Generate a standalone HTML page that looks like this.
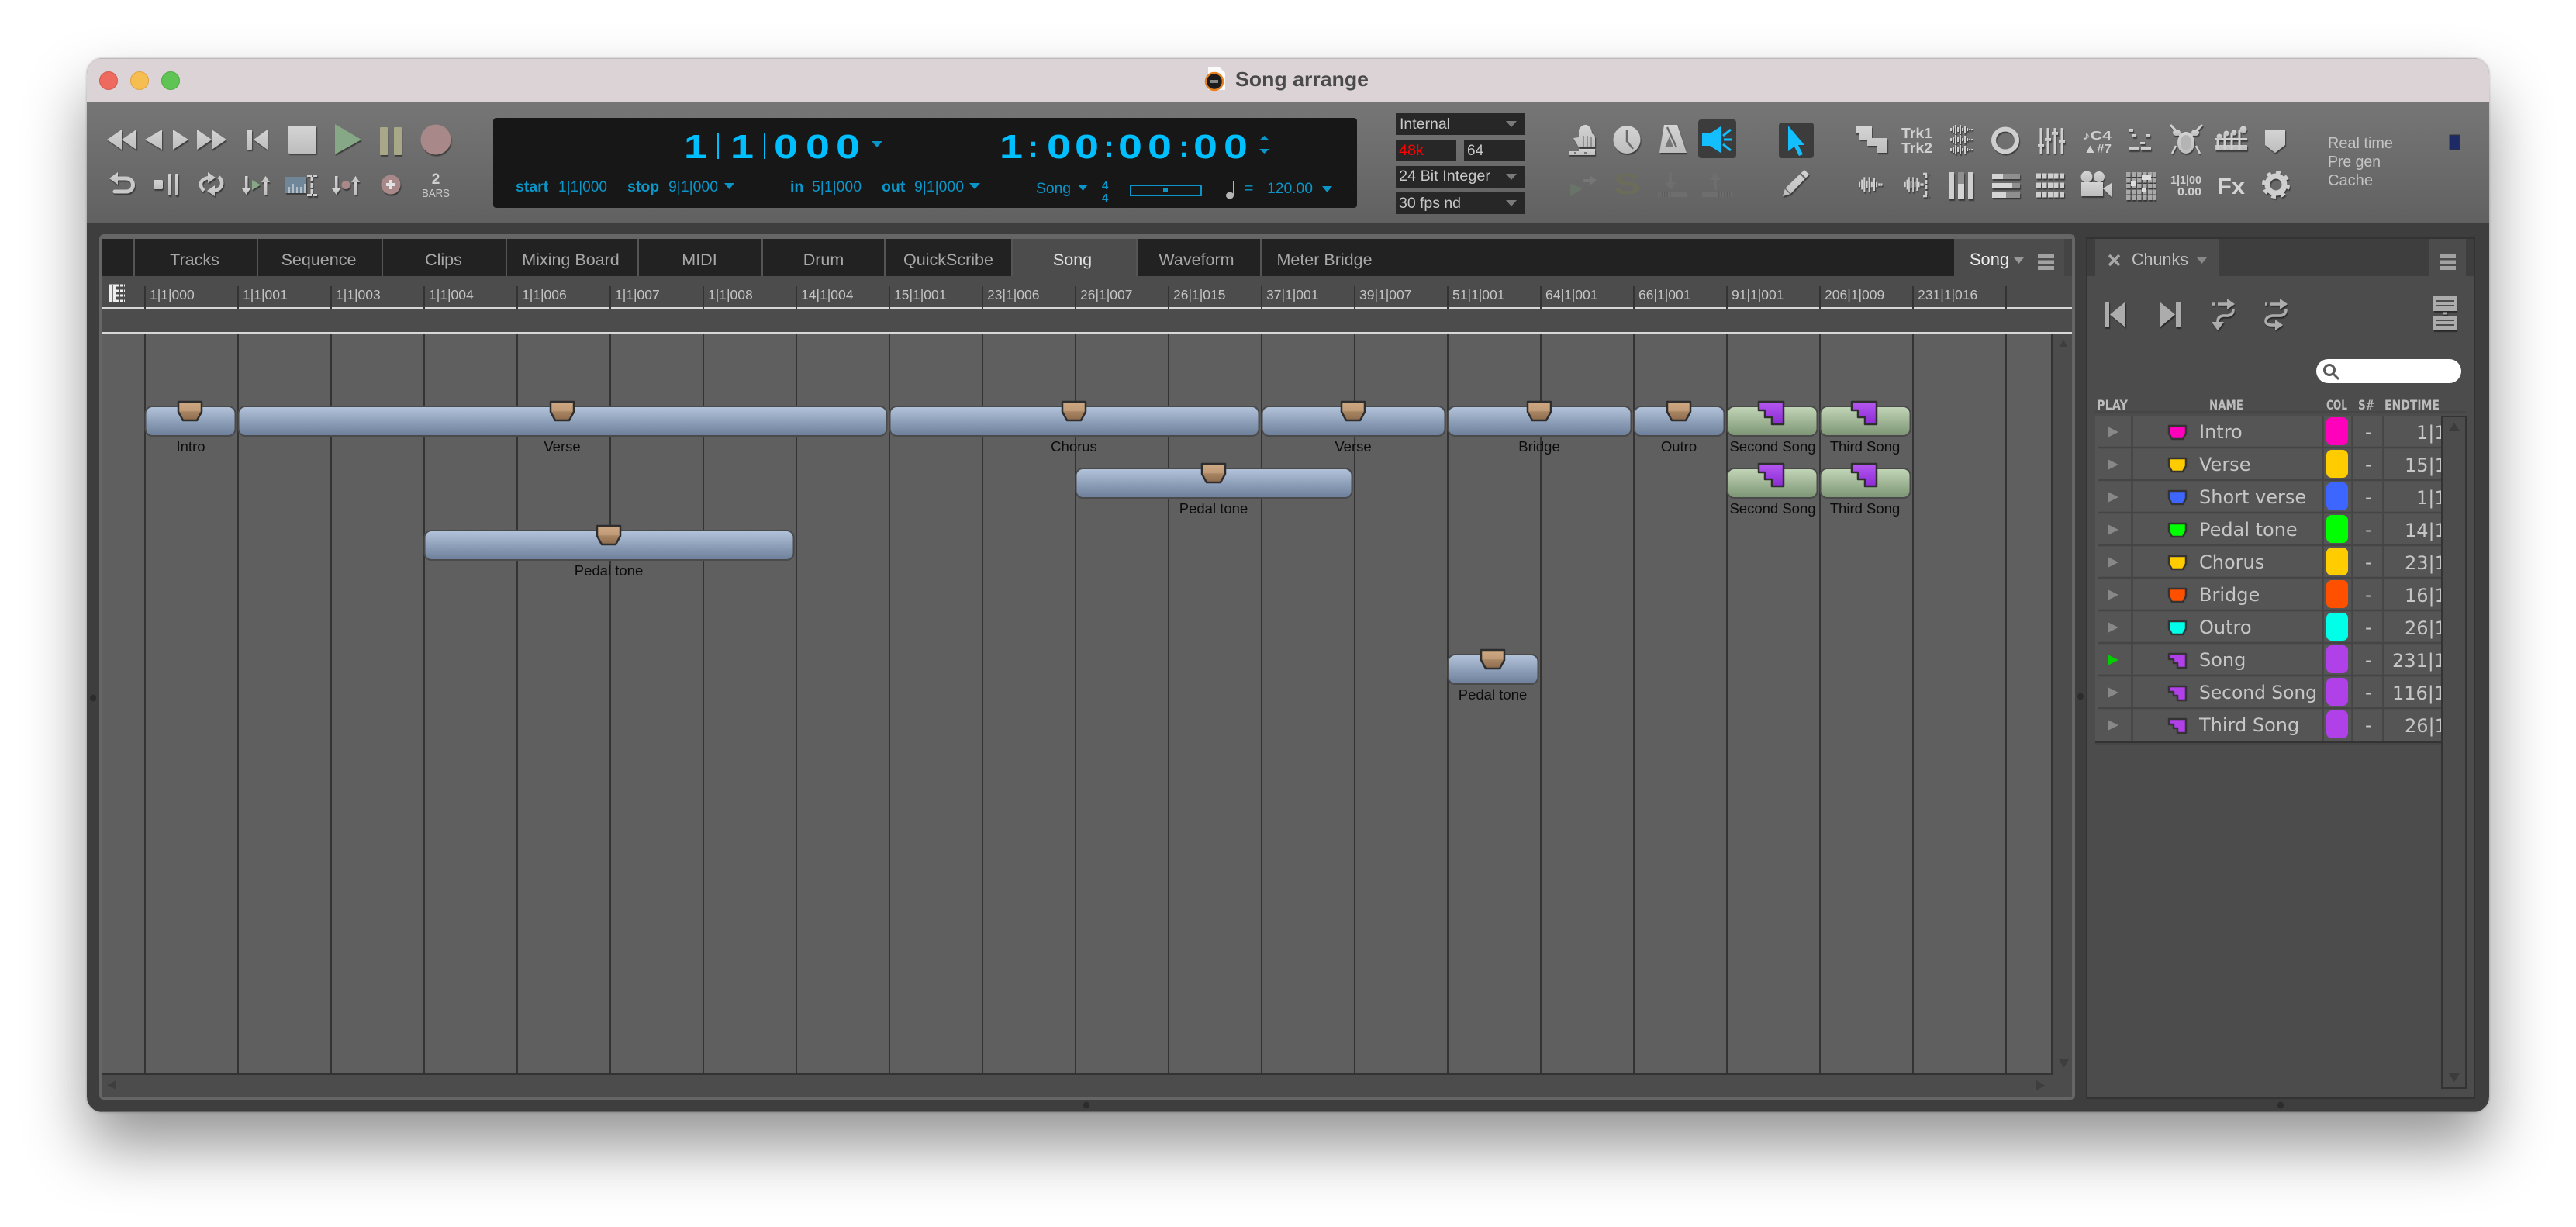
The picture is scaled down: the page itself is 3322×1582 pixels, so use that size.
<!DOCTYPE html>
<html lang="en"><head><meta charset="utf-8"><title>Song arrange</title>
<style>
html,body{margin:0;padding:0;background:#fff;width:3322px;height:1582px;overflow:hidden}
#sh{position:absolute;left:112px;top:75px;width:3098px;height:1359px;border-radius:20px;box-shadow:0 44px 80px rgba(0,0,0,.42),0 0 3px rgba(0,0,0,.25)}
svg{position:absolute;left:0;top:0}
text{font-family:"Liberation Sans",sans-serif}
.dj{font-family:"DejaVu Sans",sans-serif}
.rul{font-size:17.5px;fill:#c4c4c4}
.tab{font-size:21.5px;fill:#a8a8a8;text-anchor:middle}
.lb{font-size:18.5px;fill:#0c0c0c;text-anchor:middle}
.bl{font-size:19.5px;fill:#0a96c8}
.blb{font-size:19.5px;fill:#0a96c8;font-weight:bold}
.big{font-size:44px;font-weight:bold;fill:#00bfff}
.dd{font-size:19px;fill:#c8c8c8}
.nm{font-size:24px;fill:#c6c6c6}
.et{font-size:24px;fill:#c6c6c6}
.hd{font-size:17px;font-weight:bold;fill:#bcbcbc}
</style></head><body>
<div id="sh"></div>
<svg width="3322" height="1582" viewBox="0 0 3322 1582" xmlns="http://www.w3.org/2000/svg">
<defs>
<linearGradient id="tb" x1="0" y1="0" x2="0" y2="1"><stop offset="0" stop-color="#767676"/><stop offset="1" stop-color="#616161"/></linearGradient>
<linearGradient id="ic" x1="0" y1="0" x2="0" y2="1"><stop offset="0" stop-color="#d4d4d4"/><stop offset="1" stop-color="#bdbdbd"/></linearGradient>
<linearGradient id="blu" x1="0" y1="0" x2="0" y2="1"><stop offset="0" stop-color="#b3c4db"/><stop offset="1" stop-color="#6c7e99"/></linearGradient>
<linearGradient id="grn" x1="0" y1="0" x2="0" y2="1"><stop offset="0" stop-color="#c3d7b8"/><stop offset="1" stop-color="#7c9474"/></linearGradient>
<linearGradient id="br" x1="0" y1="0" x2="0" y2="1"><stop offset="0" stop-color="#d0aa84"/><stop offset=".5" stop-color="#bf9a76"/><stop offset=".52" stop-color="#a98764"/><stop offset="1" stop-color="#8c6a4c"/></linearGradient>
<linearGradient id="pur" x1="0" y1="0" x2="0" y2="1"><stop offset="0" stop-color="#b658f2"/><stop offset="1" stop-color="#8a2cd2"/></linearGradient>
<filter id="ds" x="-5%" y="-20%" width="110%" height="140%"><feDropShadow dx="1" dy="2" stdDeviation=".6" flood-color="#000" flood-opacity=".45"/></filter>
<pattern id="ln" width="36" height="40" patternUnits="userSpaceOnUse"><rect x="35" width="1" height="40" fill="#000" opacity=".025"/></pattern>
<clipPath id="win"><rect x="112" y="75" width="3098" height="1359" rx="20"/></clipPath>
<path id="mk" d="M-15 0H15V13L9 24H-9L-15 13Z" fill="url(#br)" stroke="#2e2e2e" stroke-width="2.5" stroke-linejoin="round"/>
<path id="pk" d="M-16 0H16V29H1V20H-8V11H-16Z" fill="url(#pur)" stroke="#2e2e2e" stroke-width="2.5" stroke-linejoin="round"/>
<path id="rk" d="M2797 549H2819V559L2815 566H2801L2797 559Z" stroke="#333" stroke-width="2.5" stroke-linejoin="round"/>
<path id="rs" d="M2797 549H2819V567H2808V561H2803V556H2797Z" stroke="#333" stroke-width="2.5" stroke-linejoin="round"/>
<polygon id="pt" points="2718,550 2732,557 2718,564"/>
<path id="wv" d="M1 -2V2M4 -4V4M7 -6V6M10 -3V3M13 -6V6M16 -2V2M19 -5V5M22 -2V2M25 -1V1M28 -1V1" fill="none" stroke="#cfcfcf" stroke-width="2"/>
</defs>

<g clip-path="url(#win)">
<rect x="112" y="75" width="3098" height="1359" fill="#3e3e3e"/>
<rect x="112" y="75" width="3098" height="57" fill="#dcd3d7"/>
<rect x="112" y="75" width="3098" height="1" fill="#bdb8ba"/>
<rect x="112" y="132" width="3098" height="156" fill="url(#tb)"/>
<rect x="112" y="1432" width="3098" height="2" fill="#6a6a6a"/>
</g>

<!-- title bar -->
<circle cx="140" cy="104" r="11.5" fill="#ee6a5f" stroke="#d4574d"/>
<circle cx="180" cy="104" r="11.5" fill="#f6be50" stroke="#dea23c"/>
<circle cx="220" cy="104" r="11.5" fill="#5fc454" stroke="#4eab44"/>
<path d="M1558 87H1573L1580 94V116H1558Z" fill="#fbfbfb"/>
<circle cx="1566" cy="105" r="11" fill="#1c1c1c" stroke="#e8801e" stroke-width="2.5"/>
<rect x="1561" y="103" width="10" height="4" fill="#888"/>
<text x="1593" y="111" font-size="26" font-weight="bold" fill="#4a4a4a" textLength="172" lengthAdjust="spacingAndGlyphs">Song arrange</text>

<!-- transport -->
<g filter="url(#ds)" fill="url(#ic)" stroke-linejoin="round">
<polygon points="138,180 157,167 157,193"/><polygon points="157,180 176,167 176,193"/>
<polygon points="187,180 209,167 209,193"/>
<polygon points="223,167 243,180 223,193"/>
<polygon points="254,167 273,180 254,193"/><polygon points="273,167 292,180 273,193"/>
<rect x="318" y="167" width="7" height="26" rx="1"/><polygon points="345,167 327,180 345,193"/>
<rect x="372" y="162" width="36" height="36" rx="1.5"/>
<polygon points="432,160 466,180 432,199" fill="#86a886"/>
<rect x="490" y="164" width="10" height="36" rx="1" fill="#a8a888"/><rect x="508" y="164" width="10" height="36" rx="1" fill="#a8a888"/>
<circle cx="562" cy="180" r="19.5" fill="#a88888"/>
<path d="M150 230H163A8.5 8.5 0 0 1 163 247H148" fill="none" stroke="#c8c8c8" stroke-width="5" stroke-linecap="round"/>
<polygon points="141,230 152,222 152,238"/>
<rect x="198" y="232" width="12" height="12" rx="2"/><rect x="217" y="224" width="3.5" height="28" rx="1"/><rect x="226" y="224" width="4" height="28" rx="1"/>
<path d="M263 246Q258 241 259 236Q261 230 270 229M282 228Q287 233 286 238Q284 245 275 246" fill="none" stroke="#c8c8c8" stroke-width="4.500"/>
<polygon points="268,222 278,229 268,236"/><polygon points="277,239 267,246 277,253"/>
<rect x="316" y="227" width="3.5" height="18"/><polygon points="312,243 323,243 317.5,251"/>
<polygon points="325,232 336,238.500 325,245" fill="#86a886"/>
<rect x="341" y="233" width="3.500" height="18"/><polygon points="337,235 348,235 342.500,227"/>
<path d="M368 228H395V249H368Z" fill="#6f8799"/>
<path d="M373 249V241M378 249V237M383 249V241M388 249V241M393 249V237" stroke="#c8d0d6" stroke-width="1.5"/>
<path d="M402 228V250M396 226.500H409M396 251.500H409" stroke="#cfcfcf" stroke-width="3" fill="none" stroke-dasharray="6 2"/>
<rect x="432" y="227" width="3.500" height="18"/><polygon points="428,243 439,243 433.500,251"/>
<circle cx="446" cy="238.500" r="5.500" fill="#a88888"/>
<rect x="457" y="233" width="3.500" height="18"/><polygon points="453,235 464,235 458.500,227"/>
<circle cx="504" cy="238" r="12.500" fill="#a88888"/>
<path d="M504 232V244M498 238H510" stroke="#e2e2e2" stroke-width="4"/>
</g>
<text x="562" y="237" font-size="19" font-weight="bold" fill="#d0d0d0" text-anchor="middle">2</text>
<text x="544" y="254" font-size="15" fill="#c8c8c8" textLength="36" lengthAdjust="spacingAndGlyphs">BARS</text>

<!-- counter display -->
<rect x="636" y="152" width="1114" height="116" rx="4" fill="#171717"/>
<g class="big">
<text class="big" x="882" y="204" textLength="30" lengthAdjust="spacingAndGlyphs">1</text>
<rect x="925" y="171" width="2" height="34" fill="#00bfff"/>
<text class="big" x="942" y="204" textLength="30" lengthAdjust="spacingAndGlyphs">1</text>
<rect x="985" y="171" width="2" height="34" fill="#00bfff"/>
<text class="big" x="998" y="204" textLength="31" lengthAdjust="spacingAndGlyphs">0</text>
<text class="big" x="1039" y="204" textLength="31" lengthAdjust="spacingAndGlyphs">0</text>
<text class="big" x="1078" y="204" textLength="31" lengthAdjust="spacingAndGlyphs">0</text>
<text class="big" x="1289" y="204" textLength="30" lengthAdjust="spacingAndGlyphs">1</text>
<text class="big" x="1325" y="202" style="font-size:38px" textLength="14" lengthAdjust="spacingAndGlyphs">:</text>
<text class="big" x="1350" y="204" textLength="31" lengthAdjust="spacingAndGlyphs">0</text>
<text class="big" x="1386" y="204" textLength="31" lengthAdjust="spacingAndGlyphs">0</text>
<text class="big" x="1423" y="202" style="font-size:38px" textLength="14" lengthAdjust="spacingAndGlyphs">:</text>
<text class="big" x="1442" y="204" textLength="31" lengthAdjust="spacingAndGlyphs">0</text>
<text class="big" x="1480" y="204" textLength="31" lengthAdjust="spacingAndGlyphs">0</text>
<text class="big" x="1520" y="202" style="font-size:38px" textLength="14" lengthAdjust="spacingAndGlyphs">:</text>
<text class="big" x="1539" y="204" textLength="31" lengthAdjust="spacingAndGlyphs">0</text>
<text class="big" x="1578" y="204" textLength="31" lengthAdjust="spacingAndGlyphs">0</text>
</g>
<g fill="#0a96c8">
<polygon points="1124,182 1138,182 1131,190"/>
<polygon points="1624,181 1637,181 1630.500,175"/><polygon points="1624,192 1637,192 1630.500,198"/>
<polygon points="934,236 947,236 940.500,244"/>
<polygon points="1250,236 1264,236 1257,244"/>
<polygon points="1390,238 1403,238 1396.500,246"/>
<polygon points="1705,240 1718,240 1711.500,248"/>
</g>
<text class="blb" x="665" y="247">start</text>
<text class="bl" x="720" y="247" textLength="63" lengthAdjust="spacingAndGlyphs">1|1|000</text>
<text class="blb" x="809" y="247">stop</text>
<text class="bl" x="862" y="247" textLength="64" lengthAdjust="spacingAndGlyphs">9|1|000</text>
<text class="blb" x="1019" y="247">in</text>
<text class="bl" x="1047" y="247" textLength="64" lengthAdjust="spacingAndGlyphs">5|1|000</text>
<text class="blb" x="1137" y="247">out</text>
<text class="bl" x="1179" y="247" textLength="64" lengthAdjust="spacingAndGlyphs">9|1|000</text>
<text class="bl" x="1336" y="249" textLength="45" lengthAdjust="spacingAndGlyphs">Song</text>
<text class="blb" x="1421" y="244" style="font-size:15px">4</text>
<text class="blb" x="1421" y="260" style="font-size:15px">4</text>
<rect x="1458" y="239" width="91" height="13" fill="none" stroke="#0a96c8" stroke-width="2"/>
<rect x="1500" y="242" width="6" height="6" fill="#0a96c8"/>
<ellipse cx="1586" cy="252" rx="5" ry="4.500" fill="#b4b4b4"/><rect x="1590" y="234" width="1.500" height="18" fill="#b4b4b4"/>
<text class="bl" x="1605" y="249">=</text>
<text class="bl" x="1634" y="249" textLength="59" lengthAdjust="spacingAndGlyphs">120.00</text>

<!-- dropdowns -->
<g fill="#272727">
<rect x="1800" y="146" width="166" height="28"/><rect x="1800" y="180" width="78" height="28"/><rect x="1888" y="180" width="78" height="28"/><rect x="1800" y="214" width="166" height="28"/><rect x="1800" y="248" width="166" height="28"/>
</g>
<text class="dd" x="1805" y="166" textLength="65" lengthAdjust="spacingAndGlyphs">Internal</text>
<text class="dd" x="1804" y="200" style="fill:#ff0000" textLength="32" lengthAdjust="spacingAndGlyphs">48k</text>
<text class="dd" x="1892" y="200">64</text>
<text class="dd" x="1804" y="233" textLength="118" lengthAdjust="spacingAndGlyphs">24 Bit Integer</text>
<text class="dd" x="1804" y="268" textLength="80" lengthAdjust="spacingAndGlyphs">30 fps nd</text>
<g fill="#7a7a7a"><polygon points="1942,156 1956,156 1949,164"/><polygon points="1942,224 1956,224 1949,232"/><polygon points="1942,258 1956,258 1949,266"/></g>

<!-- right toolbar icons -->
<rect x="2190" y="154" width="49" height="50" rx="4" fill="#3c3c3c"/>
<rect x="2294" y="158" width="45" height="46" rx="4" fill="#3c3c3c"/>
<g fill="#14bfff" stroke="none">
<polygon points="2195,172 2205,172 2219,163 2219,197 2205,188 2195,188"/>
<path d="M2222 175L2232 167M2223 180H2234M2222 186L2232 194" stroke="#14bfff" stroke-width="3" fill="none"/>
<polygon points="2306,162 2327,187 2319,187 2325,199 2320,201 2314,189 2306,195"/>
</g>
<g filter="url(#ds)" fill="url(#ic)">
<path d="M2036 190L2029 178L2036 177V167Q2040 160 2046 161Q2052 163 2053 172L2057 176V190Z"/>
<path d="M2042 175V190M2047 175V190M2052 177V190" stroke="#777" stroke-width="1.300"/>
<path d="M2036 192H2057V200H2023V195H2036Z"/>
<path d="M2030 197H2033M2043 197H2046" stroke="#777" stroke-width="2"/>
<ellipse cx="2098" cy="180" rx="17.500" ry="18"/>
<path d="M2098 167V182L2106 192" fill="none" stroke="#6a6a6a" stroke-width="2.500"/>
<path d="M2146 161H2163L2175 197H2140Z"/>
<path d="M2150 164L2162 190" stroke="#6a6a6a" stroke-width="2.500"/><path d="M2153 176L2147 190H2158Z" fill="#777"/>
<polygon points="2393,163 2414,163 2414,178 2434,178 2434,197 2421,197 2421,188 2408,188 2408,180 2398,180 2398,172 2393,172"/>
<use href="#wv" x="2515" y="167"/><use href="#wv" x="2515" y="180"/><use href="#wv" x="2515" y="193"/>
<ellipse cx="2586" cy="181" rx="15" ry="14.500" fill="none" stroke="#cfcfcf" stroke-width="6"/>
<path d="M2632 165V198M2641 165V198M2650 165V198M2659 165V198" stroke="#cfcfcf" stroke-width="3"/>
<rect x="2628" y="186" width="8" height="4"/><rect x="2637" y="178" width="8" height="4"/><rect x="2646" y="170" width="8" height="4"/><rect x="2655" y="181" width="8" height="4"/>
<rect x="2745" y="166" width="6" height="4"/><rect x="2750" y="173" width="5" height="4"/><rect x="2767" y="173" width="6" height="4"/><rect x="2760" y="183" width="6" height="3"/><rect x="2745" y="190" width="14" height="4"/><rect x="2761" y="190" width="13" height="4"/>
<ellipse cx="2819" cy="184" rx="11" ry="14"/><ellipse cx="2819" cy="184" rx="7" ry="10" fill="#b4b4b4"/>
<path d="M2799 161L2812 175M2840 161L2826 175" stroke="#cfcfcf" stroke-width="3"/>
<ellipse cx="2807" cy="171" rx="5" ry="4"/><ellipse cx="2831" cy="171" rx="5" ry="4"/>
<path d="M2801 198L2806 188M2837 198L2832 188" stroke="#cfcfcf" stroke-width="2.500"/>
<path d="M2857 178H2898V181H2857ZM2857 187H2898V194H2857Z"/>
<path d="M2860 178V194M2869 173V194M2878 172V194M2888 167V194" stroke="#cfcfcf" stroke-width="3"/>
<circle cx="2862" cy="176" r="3.500"/><circle cx="2871" cy="172" r="3.500"/><circle cx="2881" cy="171" r="3.500"/><circle cx="2893" cy="167" r="4.500"/>
<polygon points="2921,167 2947,167 2947,187 2934,197 2921,187"/>
<path d="M2299 253L2302 243L2327 219L2333 225L2309 250Z"/>
<path d="M2322 224L2328 230" stroke="#666" stroke-width="2"/><path d="M2302 243L2309 250" stroke="#666" stroke-width="1.500"/>
<use href="#wv" transform="translate(2397,238) scale(1.05,1.6)"/>
<use href="#wv" transform="translate(2456,238) scale(.85,1.6)"/>
<path d="M2484 225V252M2480 224H2488M2480 253H2488" stroke="#cfcfcf" stroke-width="2.500" stroke-dasharray="5 2" fill="none"/>
<rect x="2513" y="222" width="7" height="35" fill="#cfcfcf"/><rect x="2525" y="222" width="8" height="35" fill="#8f8f8f"/><rect x="2525" y="237" width="8" height="20" fill="#d4d4d4"/><rect x="2538" y="222" width="7" height="35" fill="#cfcfcf"/>
<rect x="2569" y="224" width="36" height="7" fill="#8f8f8f"/><rect x="2569" y="224" width="14" height="7" fill="#d4d4d4"/>
<rect x="2569" y="236" width="36" height="7" fill="#8f8f8f"/><rect x="2569" y="236" width="26" height="7" fill="#d4d4d4"/>
<rect x="2569" y="248" width="36" height="7" fill="#8f8f8f"/><rect x="2569" y="248" width="18" height="7" fill="#d4d4d4"/>
<path d="M2626 227H2663M2626 239H2663M2626 251H2663" stroke="#cfcfcf" stroke-width="7" stroke-dasharray="6 1.500"/>
<circle cx="2691" cy="228" r="7.500"/><circle cx="2707" cy="228" r="7"/>
<rect x="2684" y="235" width="28" height="18"/><polygon points="2712,243 2723,236 2723,254"/>
<path d="M2742 225H2780M2742 232.500H2780M2742 240H2780M2742 247.500H2780M2742 255H2780" stroke="#a8a8a8" stroke-width="6" stroke-dasharray="5.500 1.500"/>
<path d="M2762 229H2774M2748 237H2755M2762 245H2768" stroke="#dedede" stroke-width="6"/>
<circle cx="2935" cy="238" r="11" fill="none" stroke="#cfcfcf" stroke-width="7"/>
<circle cx="2935" cy="238" r="15" fill="none" stroke="#cfcfcf" stroke-width="6" stroke-dasharray="5.500 6.280"/>
</g>
<g fill="#d0d0d0" font-weight="bold">
<text x="2452" y="178" font-size="18" font-weight="bold" fill="#d0d0d0" textLength="40" lengthAdjust="spacingAndGlyphs">Trk1</text>
<text x="2452" y="197" font-size="18" font-weight="bold" fill="#d0d0d0" textLength="40" lengthAdjust="spacingAndGlyphs">Trk2</text>
<text x="2685" y="180" font-size="16" font-weight="bold" fill="#d0d0d0" textLength="38" lengthAdjust="spacingAndGlyphs">♪C4</text>
<text x="2687" y="197" font-size="16" font-weight="bold" fill="#d0d0d0" textLength="36" lengthAdjust="spacingAndGlyphs">▲#7</text>
<text x="2799" y="237" font-size="15" font-weight="bold" fill="#d0d0d0" textLength="40" lengthAdjust="spacingAndGlyphs">1|1|00</text>
<text x="2808" y="252" font-size="15" font-weight="bold" fill="#d0d0d0" textLength="31" lengthAdjust="spacingAndGlyphs">0.00</text>
<text x="2859" y="250" font-size="29" font-weight="bold" fill="#d4d4d4" textLength="36" lengthAdjust="spacingAndGlyphs">Fx</text>
</g>
<!-- dimmed -->
<g fill="#6e6e6e">
<polygon points="2025,237 2041,243 2025,253" fill="#697469"/>
<path d="M2042 231H2050V226L2059 232L2050 239V235H2042Z" fill="#767676"/>
<rect x="2152" y="222" width="4" height="15"/><polygon points="2147,235 2161,235 2154,245"/>
<path d="M2138 248H2175V254H2138Z" fill="#6e6e6e"/>
<path d="M2139 251H2156" stroke="#5e5e5e" stroke-width="6" stroke-dasharray="1.500 2"/>
<polygon points="2205,232 2219,232 2212,222"/><rect x="2210" y="230" width="4" height="15"/>
<path d="M2195 248H2233V254H2195Z" fill="#6e6e6e"/>
<path d="M2216 251H2233" stroke="#5e5e5e" stroke-width="6" stroke-dasharray="1.500 2"/>
</g>
<text x="2081" y="250" font-size="38" font-weight="bold" fill="#6c6c5a" textLength="35" lengthAdjust="spacingAndGlyphs">S</text>

<text x="3002" y="191" font-size="20" fill="#c4c4c4" textLength="84" lengthAdjust="spacingAndGlyphs">Real time</text>
<text x="3002" y="215" font-size="20" fill="#c4c4c4" textLength="68" lengthAdjust="spacingAndGlyphs">Pre gen</text>
<text x="3002" y="239" font-size="20" fill="#c4c4c4" textLength="58" lengthAdjust="spacingAndGlyphs">Cache</text>
<rect x="3159" y="174" width="13" height="19" fill="#1e2a66" stroke="#333" stroke-width="1"/>

<!-- main panel -->
<rect x="128" y="302" width="2548" height="1116" rx="6" fill="#666"/>
<rect x="132" y="308" width="2540" height="1106" fill="#4c4c4c"/>
<rect x="132" y="308" width="2388" height="48" fill="#222"/>
<rect x="2662" y="308" width="10" height="48" fill="#444"/>
<rect x="1306" y="308" width="160" height="48" fill="#4c4c4c"/>
<path d="M173 308V356M332 308V356M493 308V356M653 308V356M823 308V356M983 308V356M1141 308V356M1305 308V356M1466 308V356M1626 308V356" stroke="#555" stroke-width="2"/>
<text class="tab" x="251" y="342">Tracks</text>
<text class="tab" x="411" y="342">Sequence</text>
<text class="tab" x="572" y="342">Clips</text>
<text class="tab" x="736" y="342">Mixing Board</text>
<text class="tab" x="902" y="342">MIDI</text>
<text class="tab" x="1062" y="342">Drum</text>
<text class="tab" x="1223" y="342">QuickScribe</text>
<text class="tab" x="1383" y="342" style="fill:#e0e0e0">Song</text>
<text class="tab" x="1543" y="342">Waveform</text>
<text class="tab" x="1708" y="342">Meter Bridge</text>
<text x="2540" y="342" font-size="22" fill="#ececec" textLength="51" lengthAdjust="spacingAndGlyphs">Song</text>
<polygon points="2597,332 2610,332 2603.500,340" fill="#999"/>
<path d="M2628 330.500H2649M2628 338H2649M2628 345.500H2649" stroke="#a2a2a2" stroke-width="5"/>

<!-- ruler -->
<path d="M140 368H161M140 375H161M140 381H161M140 388H161" stroke="#eee" stroke-width="3" stroke-dasharray="13 2 3 2"/>
<path d="M140 367H149V389H140Z" fill="#eee"/><path d="M145 367V389" stroke="#4c4c4c" stroke-width="1.500"/>
<text class="rul" x="193" y="386">1|1|000</text>
<text class="rul" x="313" y="386">1|1|001</text>
<text class="rul" x="433" y="386">1|1|003</text>
<text class="rul" x="553" y="386">1|1|004</text>
<text class="rul" x="673" y="386">1|1|006</text>
<text class="rul" x="793" y="386">1|1|007</text>
<text class="rul" x="913" y="386">1|1|008</text>
<text class="rul" x="1033" y="386">14|1|004</text>
<text class="rul" x="1153" y="386">15|1|001</text>
<text class="rul" x="1273" y="386">23|1|006</text>
<text class="rul" x="1393" y="386">26|1|007</text>
<text class="rul" x="1513" y="386">26|1|015</text>
<text class="rul" x="1633" y="386">37|1|001</text>
<text class="rul" x="1753" y="386">39|1|007</text>
<text class="rul" x="1873" y="386">51|1|001</text>
<text class="rul" x="1993" y="386">64|1|001</text>
<text class="rul" x="2113" y="386">66|1|001</text>
<text class="rul" x="2233" y="386">91|1|001</text>
<text class="rul" x="2353" y="386">206|1|009</text>
<text class="rul" x="2473" y="386">231|1|016</text>
<rect x="132" y="396" width="2540" height="2" fill="#d8d8d8"/>
<rect x="132" y="428" width="2540" height="2" fill="#d8d8d8"/>
<rect x="132" y="430" width="2513" height="954" fill="#5f5f5f"/>
<path d="M187 369V398M307 369V398M427 369V398M547 369V398M667 369V398M787 369V398M907 369V398M1027 369V398M1147 369V398M1267 369V398M1387 369V398M1507 369V398M1627 369V398M1747 369V398M1867 369V398M1987 369V398M2107 369V398M2227 369V398M2347 369V398M2467 369V398M2587 369V398" stroke="#333" stroke-width="2"/>
<path d="M187 431V1384M307 431V1384M427 431V1384M547 431V1384M667 431V1384M787 431V1384M907 431V1384M1027 431V1384M1147 431V1384M1267 431V1384M1387 431V1384M1507 431V1384M1627 431V1384M1747 431V1384M1867 431V1384M1987 431V1384M2107 431V1384M2227 431V1384M2347 431V1384M2467 431V1384M2587 431V1384" stroke="#333" stroke-width="2"/>
<path d="M132 1385H2646M2646 430V1386" stroke="#333" stroke-width="2" fill="none"/>
<g fill="#3e3e3e">
<polygon points="2655,448 2667,448 2661,438"/>
<polygon points="2655,1366 2668,1366 2661.500,1377"/>
<polygon points="2626,1393 2637,1399.500 2626,1406"/>
<polygon points="150,1393 138,1399 150,1405"/>
<ellipse cx="120" cy="900" rx="4" ry="4.500" fill="#2c2c2c"/>
<ellipse cx="2683" cy="898" rx="4" ry="4.500" fill="#2c2c2c"/>
<ellipse cx="1401" cy="1425" rx="4" ry="4.500" fill="#2c2c2c"/>
<ellipse cx="2941" cy="1425" rx="4" ry="4.500" fill="#2c2c2c"/>
</g>

<!-- clips -->
<g transform="translate(-1.5,0)">
<g stroke="#4a4a4a" stroke-width="2">
<rect x="189" y="524" width="116" height="38" rx="9" fill="url(#blu)"/>
<rect x="309" y="524" width="836" height="38" rx="9" fill="url(#blu)"/>
<rect x="1149" y="524" width="476" height="38" rx="9" fill="url(#blu)"/>
<rect x="1629" y="524" width="236" height="38" rx="9" fill="url(#blu)"/>
<rect x="1869" y="524" width="236" height="38" rx="9" fill="url(#blu)"/>
<rect x="2109" y="524" width="116" height="38" rx="9" fill="url(#blu)"/>
<rect x="2229" y="524" width="116" height="38" rx="9" fill="url(#grn)"/>
<rect x="2349" y="524" width="116" height="38" rx="9" fill="url(#grn)"/>
<rect x="2229" y="604" width="116" height="38" rx="9" fill="url(#grn)"/>
<rect x="2349" y="604" width="116" height="38" rx="9" fill="url(#grn)"/>
<rect x="1389" y="604" width="356" height="38" rx="9" fill="url(#blu)"/>
<rect x="549" y="684" width="476" height="38" rx="9" fill="url(#blu)"/>
<rect x="1869" y="844" width="116" height="38" rx="9" fill="url(#blu)"/>
</g>
</g>
<use href="#mk" x="245" y="518"/><use href="#mk" x="725" y="518"/><use href="#mk" x="1385" y="518"/><use href="#mk" x="1745" y="518"/><use href="#mk" x="1985" y="518"/><use href="#mk" x="2165" y="518"/>
<use href="#mk" x="1565" y="598"/><use href="#mk" x="785" y="678"/><use href="#mk" x="1925" y="838"/>
<use href="#pk" x="2284" y="518"/><use href="#pk" x="2404" y="518"/><use href="#pk" x="2284" y="598"/><use href="#pk" x="2404" y="598"/>
<text class="lb" x="246" y="582">Intro</text>
<text class="lb" x="725" y="582">Verse</text>
<text class="lb" x="1385" y="582">Chorus</text>
<text class="lb" x="1745" y="582">Verse</text>
<text class="lb" x="1985" y="582">Bridge</text>
<text class="lb" x="2165" y="582">Outro</text>
<text class="lb" x="2286" y="582">Second Song</text>
<text class="lb" x="2405" y="582">Third Song</text>
<text class="lb" x="2286" y="662">Second Song</text>
<text class="lb" x="2405" y="662">Third Song</text>
<text class="lb" x="1565" y="662">Pedal tone</text>
<text class="lb" x="785" y="742">Pedal tone</text>
<text class="lb" x="1925" y="902">Pedal tone</text>

<!-- chunks panel -->
<rect x="2691" y="307" width="500" height="1109" fill="#4c4c4c" stroke="#333" stroke-width="2"/>
<rect x="2692" y="308" width="498" height="48" fill="#3e3e3e"/>
<rect x="2702" y="308" width="160" height="48" fill="#4c4c4c"/>
<rect x="3132" y="308" width="48" height="48" fill="#4c4c4c"/>
<path d="M2720 329L2733 342M2733 329L2720 342" stroke="#a8a8a8" stroke-width="3.500"/>
<text x="2749" y="342" font-size="22" fill="#c0c0c0" textLength="73" lengthAdjust="spacingAndGlyphs">Chunks</text>
<polygon points="2833,332 2846,332 2839.500,340" fill="#888"/>
<path d="M3146 330.500H3167M3146 338H3167M3146 345.500H3167" stroke="#a2a2a2" stroke-width="5"/>
<g filter="url(#ds)" fill="#acacac">
<rect x="2714" y="389" width="6" height="33"/><polygon points="2741,389 2721,405.500 2741,422"/>
<polygon points="2785,389 2805,405.500 2785,422"/><rect x="2806" y="389" width="6" height="33"/>
<path d="M2853 392H2856M2860 392H2874" stroke="#acacac" stroke-width="3.500"/><polygon points="2872,385 2882,392 2872,399"/>
<path d="M2880 399Q2880 406 2873 407H2867Q2860 408 2860 414V420" fill="none" stroke="#acacac" stroke-width="3.500"/><polygon points="2852,415 2868,415 2860,426"/>
<path d="M2921 392H2924M2928 392H2942" stroke="#acacac" stroke-width="3.500"/><polygon points="2940,385 2950,392 2940,399"/>
<path d="M2948 399Q2948 406 2941 407H2931Q2922 408 2922 414Q2922 419 2930 419H2936" fill="none" stroke="#acacac" stroke-width="3.500"/><polygon points="2934,412 2944,419 2934,426"/>
<rect x="3138" y="382" width="30" height="19"/><rect x="3138" y="407" width="30" height="19"/><rect x="3150" y="402.500" width="6" height="3"/>
</g>
<path d="M3141 388H3165M3141 394H3165M3141 413H3165M3141 419H3165" stroke="#4c4c4c" stroke-width="2"/>
<rect x="2987" y="463" width="187" height="31" rx="15.500" fill="#fff"/>
<circle cx="3004" cy="477" r="6.500" fill="none" stroke="#5a5a5a" stroke-width="3"/><path d="M3009 482L3016 489" stroke="#5a5a5a" stroke-width="3"/>

<text class="dj hd" x="2704" y="528" textLength="40" lengthAdjust="spacingAndGlyphs">PLAY</text>
<text class="dj hd" x="2849" y="528" textLength="44" lengthAdjust="spacingAndGlyphs">NAME</text>
<text class="dj hd" x="3000" y="528" textLength="27" lengthAdjust="spacingAndGlyphs">COL</text>
<text class="dj hd" x="3041" y="528" textLength="21" lengthAdjust="spacingAndGlyphs">S#</text>
<text class="dj hd" x="3075" y="528" textLength="71" lengthAdjust="spacingAndGlyphs">ENDTIME</text>
<rect x="2702" y="530" width="478" height="2" fill="#464646"/>

<rect x="2702" y="536" width="446" height="420" fill="#555"/>
<path d="M2705 577H3148M2705 619H3148M2705 661H3148M2705 703H3148M2705 745H3148M2705 787H3148M2705 829H3148M2705 871H3148M2705 913H3148" stroke="#454545" stroke-width="2.500"/>
<path d="M2749.500 536V956M2995.500 536V956M3033.500 536V956M3073.500 536V956" stroke="#454545" stroke-width="2.500"/>
<rect x="2702" y="955" width="446" height="3" fill="#333"/><rect x="2702" y="958" width="446" height="3" fill="#464646"/>

<g fill="#888">
<use href="#pt"/><use href="#pt" y="42"/><use href="#pt" y="84"/><use href="#pt" y="126"/><use href="#pt" y="168"/><use href="#pt" y="210"/><use href="#pt" y="252"/><use href="#pt" y="294" fill="#00d000"/><use href="#pt" y="336"/><use href="#pt" y="378"/>
</g>
<use href="#rk" fill="#ff00bb"/><use href="#rk" y="42" fill="#ffcc00"/><use href="#rk" y="84" fill="#3d66ff"/><use href="#rk" y="126" fill="#00ff00"/><use href="#rk" y="168" fill="#ffcc00"/><use href="#rk" y="210" fill="#ff5000"/><use href="#rk" y="252" fill="#00ffe8"/>
<use href="#rs" y="294" fill="#b040e8"/><use href="#rs" y="336" fill="#b040e8"/><use href="#rs" y="378" fill="#b040e8"/>
<g class="dj">
<text class="dj nm" x="2836" y="565">Intro</text>
<text class="dj nm" x="2836" y="607">Verse</text>
<text class="dj nm" x="2836" y="649">Short verse</text>
<text class="dj nm" x="2836" y="691">Pedal tone</text>
<text class="dj nm" x="2836" y="733">Chorus</text>
<text class="dj nm" x="2836" y="775">Bridge</text>
<text class="dj nm" x="2836" y="817">Outro</text>
<text class="dj nm" x="2836" y="859">Song</text>
<text class="dj nm" x="2836" y="901" textLength="152" lengthAdjust="spacingAndGlyphs">Second Song</text>
<text class="dj nm" x="2836" y="943">Third Song</text>
</g>
<rect x="3000" y="538" width="28" height="36" rx="7" fill="#ff00bb"/>
<rect x="3000" y="580" width="28" height="36" rx="7" fill="#ffcc00"/>
<rect x="3000" y="622" width="28" height="36" rx="7" fill="#3d66ff"/>
<rect x="3000" y="664" width="28" height="36" rx="7" fill="#00ff00"/>
<rect x="3000" y="706" width="28" height="36" rx="7" fill="#ffcc00"/>
<rect x="3000" y="748" width="28" height="36" rx="7" fill="#ff5000"/>
<rect x="3000" y="790" width="28" height="36" rx="7" fill="#00ffe8"/>
<rect x="3000" y="832" width="28" height="36" rx="7" fill="#b040e8"/>
<rect x="3000" y="874" width="28" height="36" rx="7" fill="#b040e8"/>
<rect x="3000" y="916" width="28" height="36" rx="7" fill="#b040e8"/>
<text class="dj nm" x="3050" y="565">-</text><text class="dj nm" x="3050" y="607">-</text><text class="dj nm" x="3050" y="649">-</text><text class="dj nm" x="3050" y="691">-</text><text class="dj nm" x="3050" y="733">-</text><text class="dj nm" x="3050" y="775">-</text><text class="dj nm" x="3050" y="817">-</text><text class="dj nm" x="3050" y="859">-</text><text class="dj nm" x="3050" y="901">-</text><text class="dj nm" x="3050" y="943">-</text>
<text class="dj et" x="3116" y="566">1|1</text>
<text class="dj et" x="3101" y="608">15|1</text>
<text class="dj et" x="3116" y="650">1|1</text>
<text class="dj et" x="3101" y="692">14|1</text>
<text class="dj et" x="3101" y="734">23|1</text>
<text class="dj et" x="3101" y="776">16|1</text>
<text class="dj et" x="3101" y="818">26|1</text>
<text class="dj et" x="3085" y="860">231|1</text>
<text class="dj et" x="3085" y="902">116|1</text>
<text class="dj et" x="3101" y="944">26|1</text>
<rect x="3149" y="537" width="31" height="866" fill="#4c4c4c" stroke="#333" stroke-width="2"/>
<polygon points="3158,556 3172,556 3165,545" fill="#3c3c3c"/>
<polygon points="3158,1384 3172,1384 3165,1395" fill="#3c3c3c"/>
</svg>
</body></html>
